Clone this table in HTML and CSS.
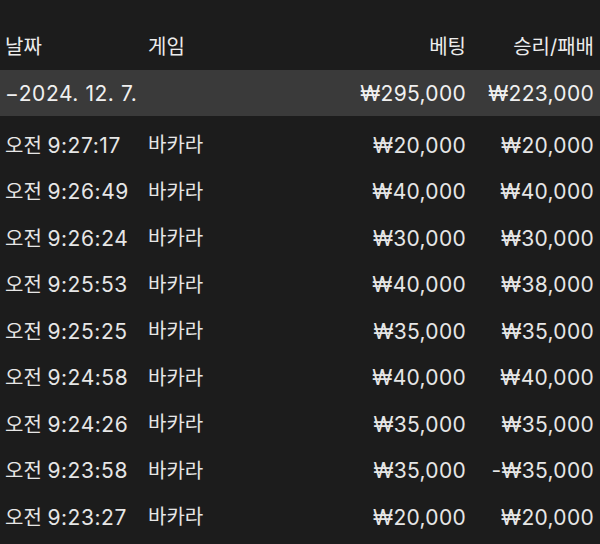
FILE: index.html
```html
<!DOCTYPE html>
<html lang="ko">
<head>
<meta charset="utf-8">
<link rel="stylesheet" href="styles.css">
</head>
<body>
<div class="table">
  <div class="row head">
    <div class="c date">날짜</div>
    <div class="c game">게임</div>
    <div class="c num">베팅</div>
    <div class="c num">승리/패배</div>
  </div>
  <div class="row summary">
    <div class="c date"><span class="n">−2024. 12. 7.</span></div>
    <div class="c game"></div>
    <div class="c num"><span class="n">₩295,000</span></div>
    <div class="c num"><span class="n">₩223,000</span></div>
  </div>
  <div class="rows">
    <div class="row"><div class="c date">오전 <span class="n">9:27:17</span></div><div class="c game">바카라</div><div class="c num"><span class="n">₩20,000</span></div><div class="c num"><span class="n">₩20,000</span></div></div>
    <div class="row"><div class="c date">오전 <span class="n">9:26:49</span></div><div class="c game">바카라</div><div class="c num"><span class="n">₩40,000</span></div><div class="c num"><span class="n">₩40,000</span></div></div>
    <div class="row"><div class="c date">오전 <span class="n">9:26:24</span></div><div class="c game">바카라</div><div class="c num"><span class="n">₩30,000</span></div><div class="c num"><span class="n">₩30,000</span></div></div>
    <div class="row"><div class="c date">오전 <span class="n">9:25:53</span></div><div class="c game">바카라</div><div class="c num"><span class="n">₩40,000</span></div><div class="c num"><span class="n">₩38,000</span></div></div>
    <div class="row"><div class="c date">오전 <span class="n">9:25:25</span></div><div class="c game">바카라</div><div class="c num"><span class="n">₩35,000</span></div><div class="c num"><span class="n">₩35,000</span></div></div>
    <div class="row"><div class="c date">오전 <span class="n">9:24:58</span></div><div class="c game">바카라</div><div class="c num"><span class="n">₩40,000</span></div><div class="c num"><span class="n">₩40,000</span></div></div>
    <div class="row"><div class="c date">오전 <span class="n">9:24:26</span></div><div class="c game">바카라</div><div class="c num"><span class="n">₩35,000</span></div><div class="c num"><span class="n">₩35,000</span></div></div>
    <div class="row"><div class="c date">오전 <span class="n">9:23:58</span></div><div class="c game">바카라</div><div class="c num"><span class="n">₩35,000</span></div><div class="c num"><span class="n">-₩35,000</span></div></div>
    <div class="row"><div class="c date">오전 <span class="n">9:23:27</span></div><div class="c game">바카라</div><div class="c num"><span class="n">₩20,000</span></div><div class="c num"><span class="n">₩20,000</span></div></div>
  </div>
</div>
</body>
</html>
```
FILE: styles.css
```css
html, body {
  margin: 0;
  padding: 0;
  background: #1c1c1c;
}
body {
  width: 600px;
  height: 544px;
  overflow: hidden;
  font-family: Inter, "Noto Sans CJK KR", sans-serif;
  font-size: 20px;
  color: #e6e6e6;
}
.table {
  padding-top: 24px;
}
.row {
  display: grid;
  grid-template-columns: 143px 178px 140px 128px;
  padding: 0 6px 0 5px;
  height: 46px;
  align-items: center;
}
.head {
  color: #ececec;
}
.summary {
  background: #3a3a3a;
  color: #f0f0f0;
}
.rows {
  padding-top: 6px;
}
.rows .row {
  height: 46.5px;
}
.c {
  white-space: nowrap;
  line-height: 1;
}
.n {
  font-size: 21px;
  letter-spacing: 0.55px;
}
.num {
  text-align: right;
}
.num .n {
  letter-spacing: 0.3px;
}
```
